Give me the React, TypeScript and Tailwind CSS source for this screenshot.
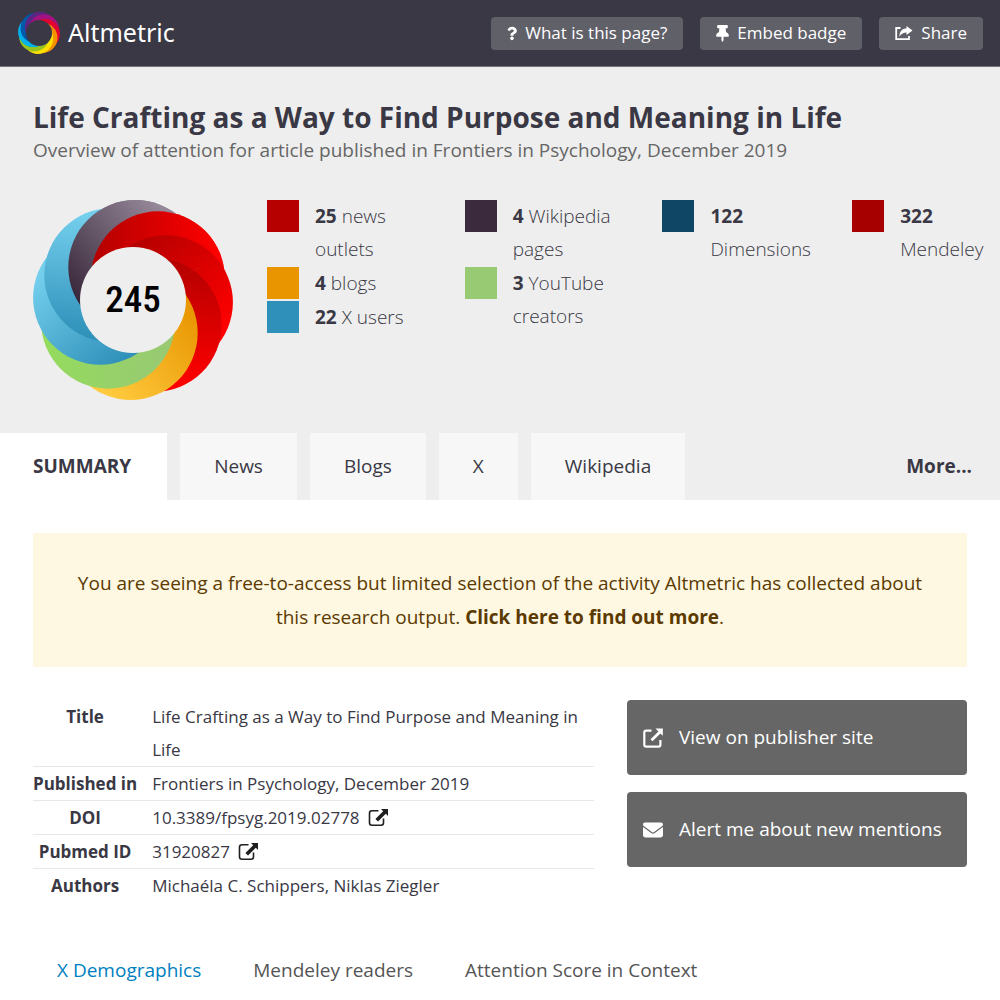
import React from "react";
import { FaQuestion, FaThumbtack } from "react-icons/fa";
import { FaEnvelope } from "react-icons/fa6";

type Stop = [string, string];

const rad = (deg: number) => (deg * Math.PI) / 180;

/** Ring of eight overlapping discs, each lying over its anticlockwise neighbour. */
function Swirl({
  id,
  petals,
  start,
  offset,
  hole,
  holeFill,
  className,
}: {
  id: string;
  petals: Stop[];
  start: number;
  offset: number;
  hole: number;
  holeFill: string;
  className: string;
}) {
  const r = 100 - offset;
  const disc = (i: number) => {
    const a = rad(start + i * 45);
    return <circle key={i} cx={offset * Math.cos(a)} cy={offset * Math.sin(a)} r={r} fill={`url(#${id}-${i})`} />;
  };
  const wedge = [-110, -55, 0, 60]
    .map((d) => `${220 * Math.cos(rad(start + d))},${220 * Math.sin(rad(start + d))}`)
    .join(" ");
  return (
    <svg viewBox="-100 -100 200 200" className={className} aria-hidden="true">
      <defs>
        {petals.map(([dark, light], i) => {
          const a = rad(start + i * 45);
          const c = Math.cos(a);
          const s = Math.sin(a);
          const at = (u: number, t: number) => [(offset + u) * c - t * s, (offset + u) * s + t * c];
          const [x1, y1] = at(-30, -60);
          const [x2, y2] = at(56, 26);
          return (
            <linearGradient key={i} id={`${id}-${i}`} gradientUnits="userSpaceOnUse" x1={x1} y1={y1} x2={x2} y2={y2}>
              <stop offset="0" stopColor={dark} />
              <stop offset="1" stopColor={light} />
            </linearGradient>
          );
        })}
        <clipPath id={`${id}-wedge`}>
          <polygon points={`0,0 ${wedge}`} />
        </clipPath>
      </defs>
      {petals.map((_, i) => disc(i))}
      <g clipPath={`url(#${id}-wedge)`}>{[0, 1, 2, 3].map(disc)}</g>
      <circle r={hole} fill={holeFill} />
    </svg>
  );
}

const badgePetals: Stop[] = [
  ["#3b2a3d", "#958899"],
  ["#b60000", "#ff0000"],
  ["#b60000", "#ff0000"],
  ["#b60000", "#ff0000"],
  ["#e89500", "#ffca3e"],
  ["#98c973", "#94db5e"],
  ["#2f90b9", "#74cfed"],
  ["#2f90b9", "#74cfed"],
];

const logoPetals: Stop[] = [
  ["#5c2483", "#5c2483"],
  ["#a3137f", "#a3137f"],
  ["#e4032e", "#e4032e"],
  ["#f39200", "#f39200"],
  ["#ffde00", "#ffde00"],
  ["#95c11f", "#95c11f"],
  ["#00b1eb", "#00b1eb"],
  ["#0058a8", "#0058a8"],
];

function ShareIcon() {
  return (
    <svg viewBox="0 0 18 16" className="h-4 w-[18px]" aria-hidden="true">
      <path d="M5.500 3H1.200V14.200H14V11" fill="none" stroke="currentColor" strokeWidth="1.800" />
      <path d="M11.500 1 17.500 5.500l-6 4.500V7.500C8.500 7.500 6.500 8.500 4.500 11.500c0-5.500 3-8 7-8z" fill="currentColor" />
    </svg>
  );
}

function ExternalIcon() {
  return (
    <svg viewBox="0 0 20 20" className="size-5 shrink-0 text-[#1f1f1f]" aria-hidden="true">
      <path d="M10.500 2.800H4Q1.500 2.800 1.500 5.300V14.700Q1.500 17.200 4 17.200H13Q15.500 17.200 15.500 14.700V10.500" fill="none" stroke="currentColor" strokeWidth="1.600" />
      <path d="M13 1H20V8l-2.200-2.200-7.800 7.800-2.600-2.600 7.800-7.800z" fill="currentColor" />
    </svg>
  );
}

function BoxLinkIcon() {
  return (
    <svg viewBox="0 0 20 20" className="size-5 shrink-0" aria-hidden="true">
      <path d="M8.500 2.700H3.200Q1.300 2.700 1.300 4.600V16.800Q1.300 18.700 3.200 18.700H15.500Q17.400 18.700 17.400 16.800V12" fill="none" stroke="currentColor" strokeWidth="2.200" />
      <path d="M12.500 0.500H19.800V7.800l-2.400-2.400-7.900 7.900-2-2 7.900-7.900z" fill="currentColor" />
    </svg>
  );
}

const legend = [
  [
    { n: "25", label: "news outlets", color: "bg-[#b60000]" },
    { n: "4", label: "blogs", color: "bg-[#e89500]" },
    { n: "22", label: "X users", color: "bg-[#2f90b9]" },
  ],
  [
    { n: "4", label: "Wikipedia pages", color: "bg-[#3b2a3d]" },
    { n: "3", label: "YouTube creators", color: "bg-[#98c973]" },
  ],
  [{ n: "122", label: "Dimensions", color: "bg-[#0f4665]" }],
  [{ n: "322", label: "Mendeley", color: "bg-[#a60000]" }],
];

const headerButton = "flex h-[33px] items-center gap-2 rounded-sm bg-[#606069] px-4 text-[17px] text-white";
const th = "pr-[15px] text-center align-top text-[17px] font-bold whitespace-nowrap";
const td = "w-full text-[17px]";
const row = "border-b border-[#e8e8e8] leading-[33px]";

export default function App() {
  return (
    <div className="min-h-screen bg-white font-['Open_Sans',sans-serif] text-[#393844]">
      <header className="flex h-[67px] items-center justify-between border-b border-[#77727c] bg-[#393844] pr-[17px] pl-[18px]">
        <a href="#home" className="flex items-center gap-2 text-white">
          <Swirl id="logo" petals={logoPetals} start={-80} offset={28} hole={62} holeFill="#393844" className="size-[42px]" />
          <span className="font-['Noto_Sans',sans-serif] text-[25px]">Altmetric</span>
        </a>
        <nav className="flex gap-[17px]">
          <button className={headerButton}>
            <FaQuestion className="h-[15px] w-[10px]" />
            What is this page?
          </button>
          <button className={headerButton}>
            <FaThumbtack className="h-[17px] w-[13px]" />
            Embed badge
          </button>
          <button className={headerButton}>
            <ShareIcon />
            Share
          </button>
        </nav>
      </header>

      <section className="bg-[#eeeeee] pt-[33px]">
        <div className="px-[33px]">
          <h1 className="text-[28px] leading-[34px] font-bold">Life Crafting as a Way to Find Purpose and Meaning in Life</h1>
          <p className="text-[19px] leading-[33px] text-[#666666]">
            Overview of attention for article published in Frontiers in Psychology, December 2019
          </p>
        </div>
        <div className="mt-[33px] flex gap-[34px] pl-[33px]">
          <div className="grid size-[200px] shrink-0 place-items-center">
            <Swirl id="badge" petals={badgePetals} start={-86} offset={33} hole={53} holeFill="#eeeeee" className="col-start-1 row-start-1 size-[200px]" />
            <span className="z-10 col-start-1 row-start-1 font-['Roboto_Condensed','Lato',sans-serif] text-[37px] font-medium text-black">245</span>
          </div>
          <div className="grid flex-1 grid-cols-[198fr_198fr_190fr_148fr] items-start">
            {legend.map((col, c) => (
              <ul key={c} className="flex flex-col gap-px pr-8 last:pr-0">
                {col.map((item) => (
                  <li key={item.n} className="flex gap-4">
                    <span className={`size-8 shrink-0 ${item.color}`} />
                    <a href="#mentions" className="text-[19px] leading-[33px] font-light">
                      <strong className="font-bold">{item.n}</strong> {item.label}
                    </a>
                  </li>
                ))}
              </ul>
            ))}
          </div>
        </div>
        <nav className="mt-[33px] flex items-stretch gap-[13px] text-[19px] leading-[67px]">
          <a href="#summary" className="bg-white pr-9 pl-[33px] font-bold">SUMMARY</a>
          {["News", "Blogs", "X", "Wikipedia"].map((t) => (
            <a key={t} href={`#${t.toLowerCase()}`} className="bg-[#f7f7f7] px-[34px]">{t}</a>
          ))}
          <a href="#more" className="ml-auto pr-7 font-bold">More...</a>
        </nav>
      </section>

      <main className="px-[33px] pt-[33px]">
        <p className="bg-[#fef7e2] px-[33px] py-[33px] text-center text-[19px] leading-[34px] text-[#5b3a00]">
          You are seeing a free-to-access but limited selection of the activity Altmetric has collected about this research output.{" "}
          <a href="#learn" className="font-bold">Click here to find out more</a>.
        </p>
        <div className="mt-[33px] flex items-start gap-[33px]">
          <table className="flex-1 border-collapse">
            <tbody>
              <tr className={row}>
                <th scope="row" className={th}>Title</th>
                <td className={td}>Life Crafting as a Way to Find Purpose and Meaning in Life</td>
              </tr>
              <tr className={row}>
                <th scope="row" className={th}>Published in</th>
                <td className={td}>Frontiers in Psychology, December 2019</td>
              </tr>
              <tr className={row}>
                <th scope="row" className={th}>DOI</th>
                <td className={td}>
                  <a href="#doi" className="flex items-center gap-2">10.3389/fpsyg.2019.02778 <ExternalIcon /></a>
                </td>
              </tr>
              <tr className={row}>
                <th scope="row" className={th}>Pubmed ID</th>
                <td className={td}>
                  <a href="#pubmed" className="flex items-center gap-2">31920827 <ExternalIcon /></a>
                </td>
              </tr>
              <tr className="leading-[33px]">
                <th scope="row" className={th}>Authors</th>
                <td className={td}>Michaéla C. Schippers, Niklas Ziegler</td>
              </tr>
            </tbody>
          </table>
          <div className="flex w-[340px] shrink-0 flex-col gap-[17px] text-[19px] text-white">
            <a href="#publisher" className="flex h-[75px] items-center gap-4 rounded-sm bg-[#666666] px-4">
              <BoxLinkIcon />
              View on publisher site
            </a>
            <button className="flex h-[75px] items-center gap-4 rounded-sm bg-[#666666] px-4">
              <FaEnvelope className="size-5" />
              Alert me about new mentions
            </button>
          </div>
        </div>
        <nav className="mt-[51px] flex gap-[52px] px-6 text-[19px] leading-[34px]">
          <a href="#demographics" className="text-[#0080c0]">X Demographics</a>
          <a href="#readers" className="text-[#555555]">Mendeley readers</a>
          <a href="#context" className="text-[#555555]">Attention Score in Context</a>
        </nav>
      </main>
    </div>
  );
}
